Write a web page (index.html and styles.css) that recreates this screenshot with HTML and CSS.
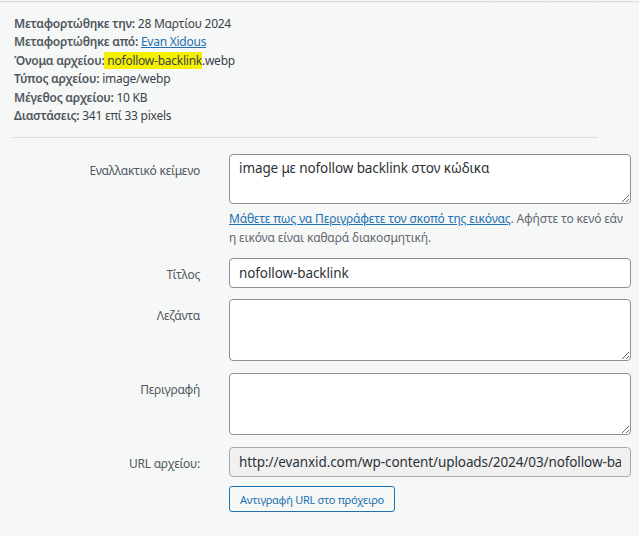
FILE: index.html
```html
<!DOCTYPE html>
<html lang="el">
<head>
<meta charset="utf-8">
<title>Λεπτομέρειες συνημμένου</title>
<link rel="stylesheet" href="styles.css">
</head>
<body>
<div class="topbar">
  <span class="tick t1"></span><span class="tick t2"></span><span class="tick t3"></span>
</div>
<div class="details">
  <div class="line"><strong>Μεταφορτώθηκε την:</strong> 28 Μαρτίου 2024</div>
  <div class="line"><strong>Μεταφορτώθηκε από:</strong> <a href="#">Evan Xidous</a></div>
  <div class="line"><strong>Όνομα αρχείου:</strong><mark> nofollow-backlink</mark>.webp</div>
  <div class="line"><strong>Τύπος αρχείου:</strong> image/webp</div>
  <div class="line"><strong>Μέγεθος αρχείου:</strong> 10 KB</div>
  <div class="line"><strong>Διαστάσεις:</strong> 341 επί 33 pixels</div>
</div>
<hr class="sep">
<div class="settings">
  <div class="row row-tight">
    <label class="lbl">Εναλλακτικό κείμενο</label>
    <div class="field">
      <textarea class="ta ta-alt">image με nofollow backlink στον κώδικα</textarea>
      <p class="help"><a href="#">Μάθετε πως να Περιγράφετε τον σκοπό της εικόνας</a>. Αφήστε το κενό εάν η εικόνα είναι καθαρά διακοσμητική.</p>
    </div>
  </div>
  <div class="row row-tight">
    <label class="lbl">Τίτλος</label>
    <div class="field"><input class="inp" type="text" value="nofollow-backlink"></div>
  </div>
  <div class="row">
    <label class="lbl">Λεζάντα</label>
    <div class="field"><textarea class="ta ta-big"></textarea></div>
  </div>
  <div class="row">
    <label class="lbl">Περιγραφή</label>
    <div class="field"><textarea class="ta ta-big"></textarea></div>
  </div>
  <div class="row">
    <label class="lbl">URL αρχείου:</label>
    <div class="field">
      <input class="inp inp-ro" type="text" readonly value="http://evanxid.com/wp-content/uploads/2024/03/nofollow-backlink.webp">
      <button class="btn" type="button">Αντιγραφή URL στο πρόχειρο</button>
    </div>
  </div>
</div>
</body>
</html>
```
FILE: styles.css
```css
html, body {
  margin: 0;
  padding: 0;
  background: #f6f7f7;
}
body {
  font-family: "Noto Sans", "Open Sans", sans-serif;
  color: #3c434a;
  font-size: 13px;
  width: 639px;
  height: 536px;
  overflow: hidden;
}
.topbar {
  position: relative;
  height: 1px;
  border-bottom: 1px solid #dcdcde;
  box-shadow: 0 1px 2px rgba(0,0,0,0.04);
}
.tick {
  position: absolute;
  top: 0;
  width: 1px;
  height: 3px;
  background: #dcdcde;
}
.t1 { left: 493px; }
.t2 { left: 546px; }
.t3 { left: 597px; }
.details {
  padding: 13px 0 0 14px;
  font-size: 12px;
  line-height: 18.4px;
  letter-spacing: -0.25px;
}
.details strong {
  font-weight: 600;
  color: #50575e;
}
.details a {
  color: #2271b1;
  text-decoration: underline;
}
mark {
  background: #f5f000;
  color: #3c434a;
}
.sep {
  margin: 12px 0 0 12px;
  width: 586px;
  border: 0;
  border-top: 1px solid #dcdcde;
  height: 0;
}
.settings {
  padding-top: 16px;
}
.row {
  display: grid;
  grid-template-columns: 200px 402px;
  column-gap: 29px;
  margin-bottom: 12px;
}
.row-tight {
  margin-bottom: 11px;
}
.lbl {
  text-align: right;
  padding-top: 8px;
  font-size: 12px;
  line-height: 18px;
  letter-spacing: -0.25px;
  color: #50575e;
}
.field {
  display: flex;
  flex-direction: column;
  align-items: flex-start;
}
.ta, .inp {
  box-sizing: border-box;
  width: 402px;
  margin: 0;
  font-family: "Noto Sans", "Open Sans", sans-serif;
  font-size: 13.5px;
  letter-spacing: -0.1px;
  color: #2c3338;
  border: 1px solid #8c8f94;
  border-radius: 4px;
  background: #fff;
  padding: 3px 9px;
  line-height: 20px;
}
.ta-alt { height: 50px; }
.ta-big { height: 62px; }
.inp { height: 30px; }
.inp-ro {
  background: #f0f0f1;
  border-color: #a7aaad;
}
.help {
  margin: 5px 0 0;
  font-size: 12px;
  line-height: 19px;
  letter-spacing: -0.15px;
  color: #646970;
  width: 396px;
}
.help a {
  color: #2271b1;
}
.btn {
  box-sizing: border-box;
  margin-top: 9px;
  height: 26px;
  width: 166px;
  padding: 0;
  font-family: "Noto Sans", "Open Sans", sans-serif;
  font-size: 11px;
  letter-spacing: -0.3px;
  color: #2271b1;
  background: #f6f7f7;
  border: 1px solid #2271b1;
  border-radius: 3px;
}
```
